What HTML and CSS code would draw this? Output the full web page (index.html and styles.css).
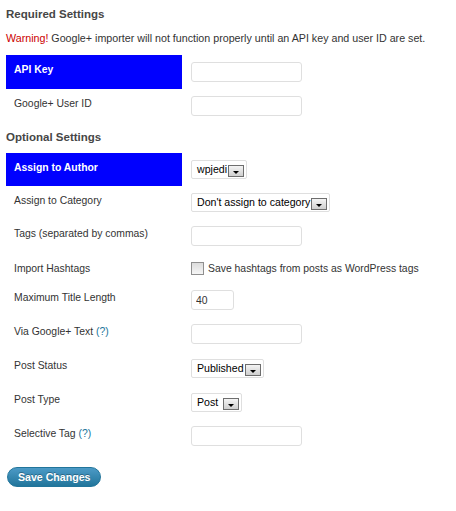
FILE: index.html
```html
<!DOCTYPE html>
<html>

<head>
    <link rel="stylesheet" href="styles.css">
</head>

<body>

    <div class="wrap">

        <h3>Required Settings</h3>
        <p class="notice"><span class="warn">Warning!</span> Google+ importer will not function properly until an API key and user ID are set.</p>

        <table class="form-table">
            <tr class="active">
                <th>API Key</th>
                <td><input type="text" class="regular-text"></td>
            </tr>
            <tr>
                <th>Google+ User ID</th>
                <td><input type="text" class="regular-text"></td>
            </tr>
        </table>

        <h3>Optional Settings</h3>

        <table class="form-table">
            <tr class="active sel-row">
                <th>Assign to Author</th>
                <td><span class="select"><span class="select-text">wpjedi</span><span class="select-btn"></span></span></td>
            </tr>
            <tr class="sel-row">
                <th>Assign to Category</th>
                <td><span class="select"><span class="select-text">Don't assign to category</span><span class="select-btn"></span></span></td>
            </tr>
            <tr>
                <th>Tags (separated by commas)</th>
                <td><input type="text" class="regular-text"></td>
            </tr>
            <tr class="check-row">
                <th>Import Hashtags</th>
                <td><label class="check"><input type="checkbox"> Save hashtags from posts as WordPress tags</label></td>
            </tr>
            <tr>
                <th>Maximum Title Length</th>
                <td><input type="text" class="small-text" value="40"></td>
            </tr>
            <tr>
                <th>Via Google+ Text <a href="#">(?)</a></th>
                <td><input type="text" class="regular-text"></td>
            </tr>
            <tr class="sel-row tall">
                <th>Post Status</th>
                <td><span class="select"><span class="select-text">Published</span><span class="select-btn"></span></span></td>
            </tr>
            <tr class="sel-row tall">
                <th>Post Type</th>
                <td><span class="select"><span class="select-text wide">Post</span><span class="select-btn"></span></span></td>
            </tr>
            <tr>
                <th>Selective Tag <a href="#">(?)</a></th>
                <td><input type="text" class="regular-text"></td>
            </tr>
        </table>

        <p class="submit"><button class="button-primary">Save Changes</button></p>

    </div>

</body>

</html>
```

FILE: styles.css
```css
body {
    margin: 0;
    padding: 0 6px;
    background-color: white;
    font-family: "Liberation Sans", Arial, sans-serif;
    font-size: 10.4px;
    color: #333;
}

h3 {
    font-size: 11.5px;
    line-height: 15px;
    color: #464646;
    margin: 7px 0 8px 0;
}

p.notice {
    margin: 10px 0 10px 0;
    font-size: 10.7px;
    line-height: 13px;
}

.warn {
    color: #cc0000;
}

a {
    color: #21759b;
    text-decoration: none;
}

table.form-table {
    border-collapse: collapse;
    border-spacing: 0;
}

.form-table th {
    width: 160px;
    padding: 8px 8px;
    text-align: left;
    vertical-align: top;
    font-weight: normal;
    line-height: 13px;
}

.form-table td {
    padding: 7px 9px;
    vertical-align: top;
    line-height: 13px;
}

.form-table tr.active th {
    background-color: #0000ff;
    color: white;
    font-weight: bold;
}

.form-table tr.sel-row td {
    padding-top: 7px;
    padding-bottom: 7px;
}

.form-table tr.sel-row.tall td {
    padding-top: 8px;
}

.form-table tr.check-row th {
    padding-top: 9px;
}

.form-table tr.check-row td {
    padding-top: 9px;
    padding-bottom: 5px;
}

input[type=text] {
    display: block;
    box-sizing: border-box;
    height: 20px;
    margin: 0;
    padding: 0 4px;
    border: 1px solid #dfdfdf;
    border-radius: 3px;
    font-family: "Liberation Sans", Arial, sans-serif;
    font-size: 10.4px;
    color: #333;
}

.regular-text {
    width: 111px;
}

.small-text {
    width: 43px;
}

.select {
    display: inline-flex;
    align-items: center;
    box-sizing: border-box;
    height: 19px;
    padding: 0 2px 0 5px;
    border: 1px solid #dfdfdf;
    border-radius: 2px;
    color: #000;
    font-size: 10.6px;
    vertical-align: top;
}

.select-text {
    padding-right: 1px;
}

.select-text.wide {
    padding-right: 5px;
}

.select-btn {
    position: relative;
    box-sizing: border-box;
    width: 16px;
    height: 12px;
    margin-top: 3px;
    border: 1px solid #6e6e6e;
    background: linear-gradient(#f4f4f4, #cfcfcf);
}

.select-btn::after {
    content: "";
    position: absolute;
    left: 4px;
    top: 5px;
    border-left: 3px solid transparent;
    border-right: 3px solid transparent;
    border-top: 3px solid #000;
}

label.check {
    display: flex;
    align-items: center;
    gap: 4px;
    color: #333;
}

input[type=checkbox] {
    appearance: none;
    -webkit-appearance: none;
    box-sizing: border-box;
    width: 13px;
    height: 13px;
    margin: 0;
    border: 1px solid #8f8f8f;
    background: linear-gradient(#dcdcdc, #f6f6f6);
}

p.submit {
    margin: 14px 0 0 1px;
}

.button-primary {
    box-sizing: border-box;
    height: 20px;
    padding: 0 10px;
    border: 1px solid #21759b;
    border-radius: 10px;
    background: linear-gradient(#4c9ac6, #21759b);
    color: white;
    font-family: "Liberation Sans", Arial, sans-serif;
    font-size: 10.6px;
    font-weight: bold;
    line-height: 18px;
    text-shadow: 0 -1px 0 rgba(0, 0, 0, 0.3);
}
```
